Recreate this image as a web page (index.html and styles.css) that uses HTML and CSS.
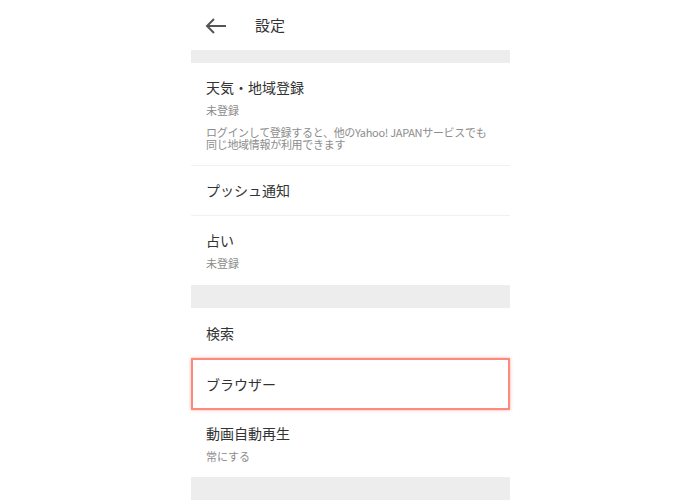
FILE: index.html
```html
<!doctype html>
<html>
<head>
<meta charset="utf-8">
<title>設定</title>
<link rel="stylesheet" href="styles.css">
</head>
<body>
	<div class="settings">
		<div class="topbar">
			<svg class="back" width="22" height="16" viewBox="0 0 22 16">
				<path d="M21 8H2M9 1L2 8l7 7" fill="none" stroke="#555" stroke-width="2"/>
			</svg>
			<h1>設定</h1>
		</div>
		<div class="gap small"></div>
		<div class="item line">
			<p class="title">天気・地域登録</p>
			<p class="sub">未登録</p>
			<p class="desc">ログインして登録すると、他のYahoo! JAPANサービスでも<br>同じ地域情報が利用できます</p>
		</div>
		<div class="item line">
			<p class="title">プッシュ通知</p>
		</div>
		<div class="item">
			<p class="title">占い</p>
			<p class="sub">未登録</p>
		</div>
		<div class="gap"></div>
		<div class="item single">
			<p class="title">検索</p>
		</div>
		<div class="item single active">
			<p class="title">ブラウザー</p>
		</div>
		<div class="item last">
			<p class="title">動画自動再生</p>
			<p class="sub">常にする</p>
		</div>
		<div class="gap"></div>
	</div>
</body>
</html>
```

FILE: styles.css
```css
/* 設定画面 */
html,body{
	margin:0;
	background:#fff;
	font-family:"Noto Sans CJK JP","Noto Sans",sans-serif;
	color:#333;
}
.settings{
	width:319px;
	margin-left:191px;
}
.topbar{
	height:50px;
	display:flex;
	align-items:center;
	padding-left:14px;
}
.topbar .back{
	margin-top:1px;
}
.topbar h1{
	margin:0 0 0 28px;
	font-size:15px;
	font-weight:400;
	line-height:20px;
}
.gap{
	height:23px;
	background:#ededed;
}
.gap.small{
	height:13px;
}
.item{
	padding:14px 15px 15px;
}
.item.line{
	border-bottom:1px solid #f1f1f1;
}
.item.single{
	padding:15px 15px 15px;
}
.item.active{
	padding:14px 13px 14px;
	border:2px solid #fb8b7e;
	box-shadow:0 0 3px rgba(250,120,100,0.6);
}
.item.last{
	padding:13px 15px 14px;
}
.item p{
	margin:0;
}
.item .title{
	font-size:14px;
	line-height:20px;
}
.item .sub{
	margin-top:6px;
	font-size:11px;
	line-height:14px;
	color:#8c8c8c;
}
.item .desc{
	margin-top:9px;
	font-size:11px;
	line-height:12px;
	color:#8c8c8c;
	letter-spacing:-0.3px;
}
```
